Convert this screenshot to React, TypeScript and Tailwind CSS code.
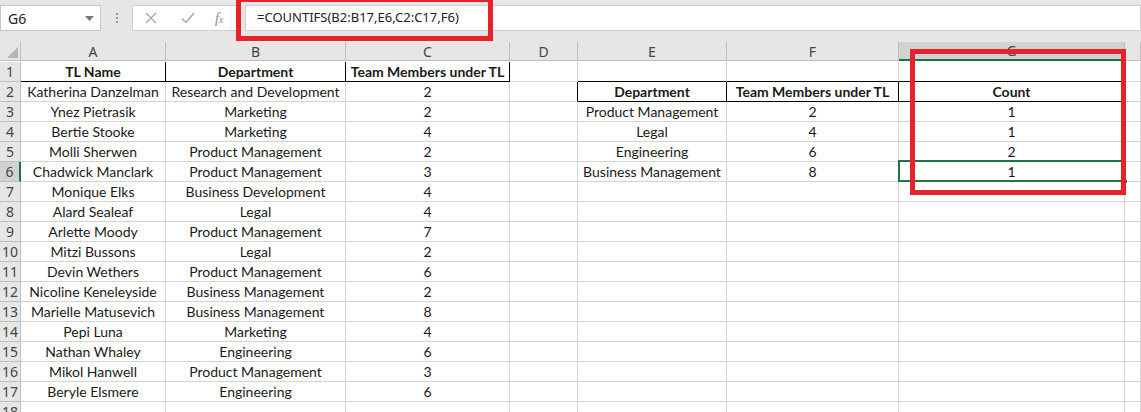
import React from 'react';

const cols = ['A', 'B', 'C', 'D', 'E', 'F', 'G', 'H'];

const people: [string, string, string][] = [
  ['Katherina Danzelman', 'Research and Development', '2'],
  ['Ynez Pietrasik', 'Marketing', '2'],
  ['Bertie Stooke', 'Marketing', '4'],
  ['Molli Sherwen', 'Product Management', '2'],
  ['Chadwick Manclark', 'Product Management', '3'],
  ['Monique Elks', 'Business Development', '4'],
  ['Alard Sealeaf', 'Legal', '4'],
  ['Arlette Moody', 'Product Management', '7'],
  ['Mitzi Bussons', 'Legal', '2'],
  ['Devin Wethers', 'Product Management', '6'],
  ['Nicoline Keneleyside', 'Business Management', '2'],
  ['Marielle Matusevich', 'Business Management', '8'],
  ['Pepi Luna', 'Marketing', '4'],
  ['Nathan Whaley', 'Engineering', '6'],
  ['Mikol Hanwell', 'Product Management', '3'],
  ['Beryle Elsmere', 'Engineering', '6'],
];

const summary: [string, string, string][] = [
  ['Product Management', '2', '1'],
  ['Legal', '4', '1'],
  ['Engineering', '6', '2'],
  ['Business Management', '8', '1'],
];

type Cell = { text: string; bold?: boolean; black?: string };

// build the 17 rows x 8 columns of cell content
function buildRows(): Cell[][] {
  const rows: Cell[][] = [];
  for (let r = 1; r <= 17; r++) {
    const row: Cell[] = cols.map(() => ({ text: '' }));
    if (r === 1) {
      row[0] = { text: 'TL Name', bold: true, black: 'border-r-black border-b-black' };
      row[1] = { text: 'Department', bold: true, black: 'border-r-black border-b-black' };
      row[2] = { text: 'Team Members under TL', bold: true, black: 'border-r-black border-b-black' };
      row[4] = { text: '', black: 'border-b-black' };
      row[5] = { text: '', black: 'border-b-black' };
      row[6] = { text: '', black: 'border-b-black' };
    } else {
      const p = people[r - 2];
      row[0] = { text: p[0] };
      row[1] = { text: p[1] };
      row[2] = { text: p[2] };
    }
    if (r === 2) {
      row[3] = { text: '', black: 'border-r-black' };
      row[4] = { text: 'Department', bold: true, black: 'border-r-black border-b-black' };
      row[5] = { text: 'Team Members under TL', bold: true, black: 'border-r-black border-b-black' };
      row[6] = { text: 'Count', bold: true, black: 'border-r-black border-b-black' };
    }
    if (r >= 3 && r <= 6) {
      const s = summary[r - 3];
      row[4] = { text: s[0] };
      row[5] = { text: s[1] };
      row[6] = { text: s[2] };
    }
    rows.push(row);
  }
  return rows;
}

export default function App() {
  const rows = buildRows();

  return (
    <div className="w-[1141px] h-[412px] overflow-hidden bg-white relative font-['Lato',sans-serif]">
      {/* formula bar */}
      <div className="h-[42px] bg-[#e6e6e6] flex items-start pt-[5px] font-['Noto_Sans',sans-serif]">
        <div className="w-[101px] h-[26px] bg-white border border-[#c6c6c6] flex items-center justify-between pl-[7px] pr-[6px] text-[14px] text-[#222]">
          <span>G6</span>
          <svg width="9" height="5" viewBox="0 0 9 5"><path d="M0 0h9L4.5 5z" fill="#777" /></svg>
        </div>
        <div className="w-[31px] h-[26px] flex flex-col items-center justify-center gap-[2px]">
          <span className="w-[2px] h-[2px] bg-[#9a9a9a]" />
          <span className="w-[2px] h-[2px] bg-[#9a9a9a]" />
          <span className="w-[2px] h-[2px] bg-[#9a9a9a]" />
        </div>
        <div className="w-[109px] h-[26px] bg-white border border-[#d0d0d0] flex items-center">
          <svg className="ml-[12px]" width="12" height="12" viewBox="0 0 12 12">
            <path d="M1 1l10 10M11 1L1 11" stroke="#a6a6a6" strokeWidth="1.3" />
          </svg>
          <svg className="ml-[24px]" width="14" height="12" viewBox="0 0 14 12">
            <path d="M1 6.5l4 4L13 1" stroke="#a6a6a6" strokeWidth="1.4" fill="none" />
          </svg>
          <span className="ml-[20px] text-[14px] text-[#8c8c8c] italic font-['Liberation_Serif',serif]">
            f<span className="text-[10px]">x</span>
          </span>
        </div>
        <div className="ml-[4px] flex-1 h-[26px] bg-white border border-[#d0d0d0] flex items-center pl-[11px] text-[13px] text-[#222]">
          =COUNTIFS(B2:B17,E6,C2:C17,F6)
        </div>
      </div>

      {/* sheet */}
      <div className="relative grid grid-cols-[21px_145px_180px_164px_68px_149px_172px_226px_1fr] auto-rows-[20px]">
        {/* column headers */}
        <div className="h-[19px] bg-[#e6e6e6] border-r border-b border-[#bfbfbf] relative">
          <svg className="absolute right-[2px] bottom-[2px]" width="11" height="11" viewBox="0 0 11 11">
            <path d="M11 0v11H0z" fill="#b5b5b5" />
          </svg>
        </div>
        {cols.map((c) => (
          <div
            key={c}
            className={
              c === 'G'
                ? 'h-[19px] bg-[#d2d2d2] border-r border-[#bfbfbf] border-b-2 border-b-[#217346] flex items-center justify-center text-[14px] text-[#444] font-["Noto_Sans",sans-serif]'
                : 'h-[19px] bg-[#e6e6e6] border-r border-b border-[#bfbfbf] flex items-center justify-center text-[14px] text-[#444] font-["Noto_Sans",sans-serif]'
            }
          >
            {c === 'H' ? '' : c}
          </div>
        ))}

        {rows.map((row, i) => (
          <React.Fragment key={i}>
            <div
              className={
                i === 5
                  ? 'bg-[#d2d2d2] border-b border-[#bfbfbf] border-r-2 border-r-[#217346] flex items-center justify-center text-[14px] text-[#444] font-["Noto_Sans",sans-serif]'
                  : 'bg-[#e6e6e6] border-r border-b border-[#bfbfbf] flex items-center justify-center text-[14px] text-[#444] font-["Noto_Sans",sans-serif]'
              }
            >
              {i + 1}
            </div>
            {row.map((cell, j) => (
              <div
                key={j}
                className={`border-r border-b border-[#d4d4d4] ${cell.black ?? ''} flex items-center justify-center whitespace-nowrap overflow-visible text-[14px] text-[#1a1a1a] ${cell.bold ? 'font-bold' : ''}`}
              >
                {cell.text}
              </div>
            ))}
          </React.Fragment>
        ))}

        {/* row 18 */}
        <div className="bg-[#e6e6e6] border-r border-b border-[#bfbfbf] flex items-center justify-center text-[14px] text-[#444] font-['Noto_Sans',sans-serif]">
          18
        </div>
        {cols.map((c) => (
          <div key={c} className="border-r border-b border-[#d4d4d4]" />
        ))}

        {/* selected cell G6 */}
        <div className="absolute left-[898px] top-[118px] w-[228px] h-[22px] border-2 border-[#217346]" />
        <div className="absolute left-[1123px] top-[137px] w-[5px] h-[5px] bg-[#217346] border border-white" />
      </div>

      {/* red highlight boxes */}
      <div className="absolute left-[236px] top-[-3px] w-[257px] h-[44px] border-[5px] border-[#e8222a]" />
      <div className="absolute left-[910px] top-[49px] w-[216px] h-[146px] border-[5px] border-[#e8222a]" />
    </div>
  );
}
